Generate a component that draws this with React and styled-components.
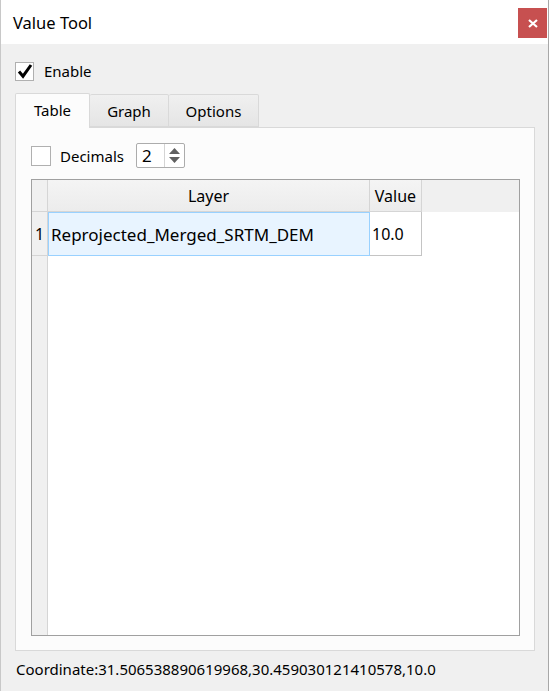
import React from "react";
import styled, { createGlobalStyle } from "styled-components";

const GlobalStyle = createGlobalStyle`
  body {
    margin: 0;
    background: #fff;
    font-family: "Noto Sans", "Open Sans", sans-serif;
    color: #000;
  }
`

const Window = styled.div`
  width: 549px;
  height: 691px;
  box-sizing: border-box;
  background: #f0f0f0;
  border-left: 1px solid #c8c8c8;
  border-right: 1px solid #a8a8a8;
  display: flex;
  flex-direction: column;
`

const TitleBar = styled.div`
  height: 44px;
  background: #fff;
  display: flex;
  align-items: center;
  padding-left: 12px;
`

const Title = styled.div`
  font-size: 16.5px;
  flex: 1;
`

const CloseButton = styled.div`
  width: 29px;
  height: 30px;
  margin-right: 1px;
  margin-top: 2px;
  background: #c75050;
  color: #fff;
  display: flex;
  align-items: center;
  justify-content: center;
`

const Body = styled.div`
  flex: 1;
  display: flex;
  flex-direction: column;
  padding: 18px 13px 0 14px;
`

const CheckRow = styled.label`
  display: flex;
  align-items: center;
  gap: ${p => p.gap || 10}px;
  font-size: 15px;
  height: ${p => p.h || 18}px;
`

const CheckBox = styled.span`
  width: ${p => p.size}px;
  height: ${p => p.size}px;
  box-sizing: border-box;
  border: 1px solid #b0b0b0;
  background: #fff;
  display: flex;
  align-items: center;
  justify-content: center;
`

const TabBar = styled.div`
  display: flex;
  align-items: flex-end;
  margin-top: 13px;
  height: 34px;
  position: relative;
  z-index: 1;
`

const Tab = styled.div`
  box-sizing: border-box;
  width: ${p => p.w}px;
  height: ${p => (p.active ? 35 : 33)}px;
  margin-bottom: ${p => (p.active ? -1 : 0)}px;
  border: 1px solid #d9d9d9;
  border-bottom: ${p => (p.active ? "none" : "1px solid #d9d9d9")};
  border-left: ${p => (p.first || p.active ? "1px solid #d9d9d9" : "none")};
  background: ${p => (p.active ? "#fcfcfc" : "linear-gradient(#f0f0f0, #e5e5e5)")};
  border-radius: 2px 2px 0 0;
  font-size: 15px;
  display: flex;
  align-items: center;
  justify-content: center;
  padding-bottom: ${p => (p.active ? 3 : 0)}px;
`

const Pane = styled.div`
  box-sizing: border-box;
  width: 520px;
  height: 524px;
  background: #fcfcfc;
  border: 1px solid #d9d9d9;
  padding: 15px 14px 14px 15px;
  display: flex;
  flex-direction: column;
  gap: 11px;
`

const DecimalsRow = styled.div`
  display: flex;
  align-items: center;
  height: 25px;
`

const SpinBox = styled.div`
  margin-left: 12px;
  width: 49px;
  height: 25px;
  box-sizing: border-box;
  border: 1px solid #acacac;
  border-radius: 2px;
  background: #fff;
  display: flex;
`

const SpinValue = styled.div`
  width: 27px;
  font-size: 17px;
  padding-left: 5px;
  box-sizing: border-box;
  line-height: 23px;
`

const SpinArrows = styled.div`
  flex: 1;
  border-left: 1px solid #d4d4d4;
  display: flex;
  flex-direction: column;
  align-items: center;
  justify-content: center;
  gap: 3px;
`

const Table = styled.div`
  flex: 1;
  display: grid;
  grid-template-columns: 16px 322px 52px 1fr;
  grid-template-rows: 32px 44px 1fr;
  border: 1px solid #a0a0a0;
  background: #fff;
  font-size: 16px;
`

const HeaderCell = styled.div`
  background: ${p => (p.plain ? "#f0f0f0" : "linear-gradient(#f4f4f4, #ececec)")};
  border-right: ${p => (p.edge ? "none" : "1px solid #d5d5d5")};
  border-bottom: ${p => (p.edge ? "none" : "1px solid #d5d5d5")};
  display: flex;
  align-items: center;
  justify-content: center;
`

const RowHead = styled.div`
  background: #f0f0f0;
  border-right: 1px solid #d5d5d5;
  border-bottom: ${p => (p.last ? "none" : "1px solid #d5d5d5")};
  display: flex;
  align-items: center;
  justify-content: center;
`

const Cell = styled.div`
  box-sizing: border-box;
  display: flex;
  align-items: center;
  padding-left: 2px;
  font-size: ${p => (p.selected ? 17 : 16)}px;
  background: ${p => (p.selected ? "#e8f4ff" : "#fff")};
  border: ${p => (p.selected ? "1px solid #99d1ff" : "none")};
  border-right: ${p => (p.selected ? "1px solid #99d1ff" : "1px solid #c4c4c4")};
  border-bottom: ${p => (p.selected ? "1px solid #99d1ff" : "1px solid #c4c4c4")};
`

const Filler = styled.div`
  grid-column: ${p => p.col};
  grid-row: ${p => p.row};
  background: #fff;
`

const Status = styled.div`
  font-size: 15px;
  padding: 8px 0 0 1px;
`

const Check = () => (
  <svg width="16" height="16" viewBox="0 0 16 16">
    <path d="M2 8.5 L6 13.2 L14 2" fill="none" stroke="#000" strokeWidth="3" strokeLinejoin="miter" />
  </svg>
)

export default function App() {
  return (
    <>
      <GlobalStyle />
      <Window>
        <TitleBar>
          <Title>Value Tool</Title>
          <CloseButton>
            <svg width="10" height="9" viewBox="0 0 10 9">
              <path d="M1 1 L9 8 M9 1 L1 8" stroke="#fff" strokeWidth="2.2" />
            </svg>
          </CloseButton>
        </TitleBar>
        <Body>
          <CheckRow>
            <CheckBox size={19}><Check /></CheckBox>
            Enable
          </CheckRow>
          <TabBar>
            <Tab w={75} active first>Table</Tab>
            <Tab w={79}>Graph</Tab>
            <Tab w={90}>Options</Tab>
          </TabBar>
          <Pane>
            <DecimalsRow>
              <CheckRow gap={9} h={25}>
                <CheckBox size={20} />
                Decimals
              </CheckRow>
              <SpinBox>
                <SpinValue>2</SpinValue>
                <SpinArrows>
                  <svg width="11" height="6" viewBox="0 0 11 6"><path d="M0 6 L5.5 0 L11 6 Z" fill="#606060" /></svg>
                  <svg width="11" height="6" viewBox="0 0 11 6"><path d="M0 0 L5.5 6 L11 0 Z" fill="#606060" /></svg>
                </SpinArrows>
              </SpinBox>
            </DecimalsRow>
            <Table>
              <HeaderCell plain />
              <HeaderCell>Layer</HeaderCell>
              <HeaderCell>Value</HeaderCell>
              <HeaderCell plain edge />
              <RowHead>1</RowHead>
              <Cell selected>Reprojected_Merged_SRTM_DEM</Cell>
              <Cell>10.0</Cell>
              <Filler col="4" row="2" />
              <RowHead last />
              <Filler col="2 / 5" row="3" />
            </Table>
          </Pane>
          <Status>Coordinate:31.506538890619968,30.459030121410578,10.0</Status>
        </Body>
      </Window>
    </>
  )
}
